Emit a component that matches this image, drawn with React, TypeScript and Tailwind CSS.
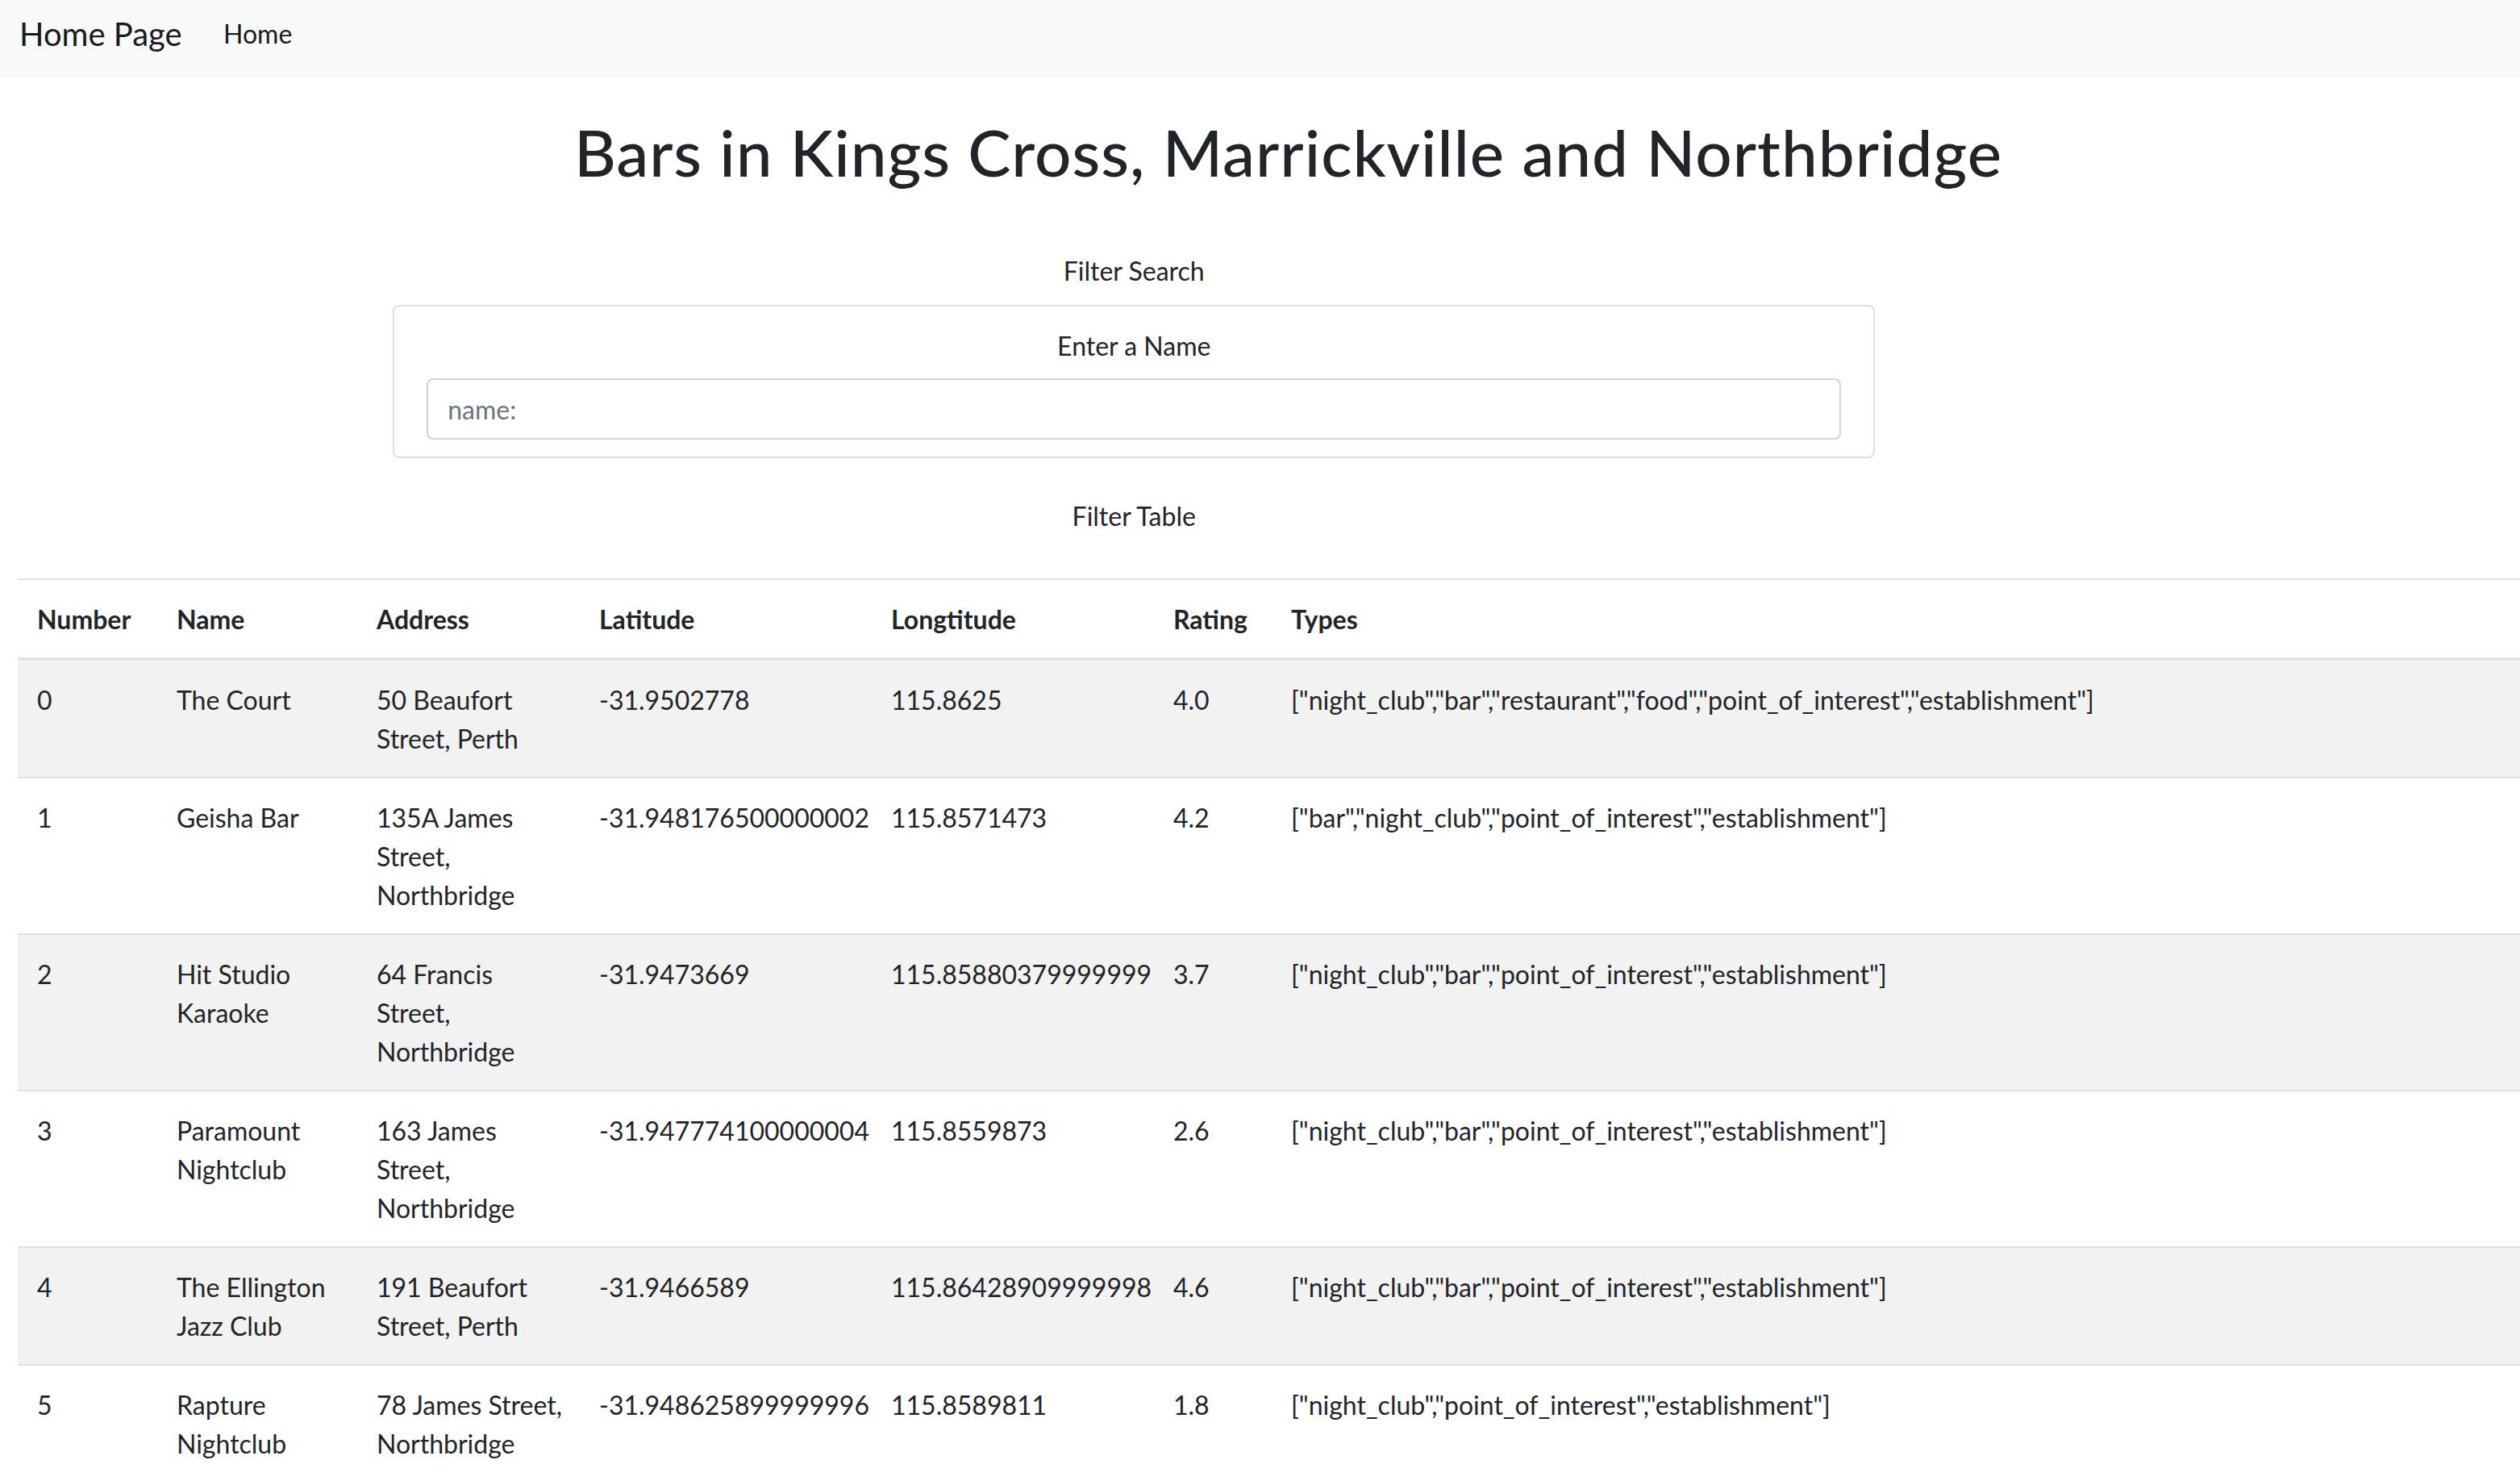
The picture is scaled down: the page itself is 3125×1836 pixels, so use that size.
import React from "react";

type Row = {
  n: string;
  name: string[];
  addr: string[];
  lat: string;
  lng: string;
  rating: string;
  types: string;
};

const T1 = '["night_club","bar","restaurant","food","point_of_interest","establishment"]';
const T2 = '["bar","night_club","point_of_interest","establishment"]';
const T3 = '["night_club","bar","point_of_interest","establishment"]';
const T4 = '["night_club","point_of_interest","establishment"]';

const rows: Row[] = [
  { n: "0", name: ["The Court"], addr: ["50 Beaufort", "Street, Perth"], lat: "-31.9502778", lng: "115.8625", rating: "4.0", types: T1 },
  { n: "1", name: ["Geisha Bar"], addr: ["135A James", "Street,", "Northbridge"], lat: "-31.948176500000002", lng: "115.8571473", rating: "4.2", types: T2 },
  { n: "2", name: ["Hit Studio", "Karaoke"], addr: ["64 Francis", "Street,", "Northbridge"], lat: "-31.9473669", lng: "115.85880379999999", rating: "3.7", types: T3 },
  { n: "3", name: ["Paramount", "Nightclub"], addr: ["163 James", "Street,", "Northbridge"], lat: "-31.947774100000004", lng: "115.8559873", rating: "2.6", types: T3 },
  { n: "4", name: ["The Ellington", "Jazz Club"], addr: ["191 Beaufort", "Street, Perth"], lat: "-31.9466589", lng: "115.86428909999998", rating: "4.6", types: T3 },
  { n: "5", name: ["Rapture", "Nightclub"], addr: ["78 James Street,", "Northbridge"], lat: "-31.948625899999996", lng: "115.8589811", rating: "1.8", types: T4 },
];

const headers = ["Number", "Name", "Address", "Latitude", "Longtitude", "Rating", "Types"];

function Lines({ lines }: { lines: string[] }) {
  return (
    <>
      {lines.map((l, i) => (
        <span key={i} className="block">
          {l}
        </span>
      ))}
    </>
  );
}

const td = "whitespace-nowrap border-t-2 border-[#dee2e6] px-[24px] pt-[25px] pb-[23px] align-top";

export default function App() {
  return (
    <div className="min-h-screen w-full overflow-hidden bg-white font-['Lato','Noto_Sans',sans-serif] text-[#212529]">
      <nav className="flex h-[96px] items-start bg-[#f8f9fa] pl-[24px]">
        <a className="w-[253px] pt-[12px] text-[40px] leading-[60px] text-[#1a1a1a]">Home Page</a>
        <a className="pt-[18px] text-[32px] leading-[48px] text-[#1a1a1a]">Home</a>
      </nav>

      <h1 className="mt-[44px] pl-[70px] text-center text-[80px] font-medium leading-[96px] tracking-[1px]">
        Bars in Kings Cross, Marrickville and Northbridge
      </h1>

      <div className="mt-[76px] w-[90%] text-center text-[32px] leading-[48px]">
        <div>Filter Search</div>
        <div className="mx-auto mt-[18px] w-[1838px] rounded-[8px] border-2 border-[#dfdfdf] px-[40px] pt-[25px] pb-[21px]">
          <div>Enter a Name</div>
          <input
            className="mt-[16px] block h-[76px] w-full rounded-[8px] border-2 border-[#ced4da] bg-white px-[24px] text-left text-[32px] text-[#495057] outline-none placeholder:text-[#6c757d]"
            placeholder="name:"
          />
        </div>
        <div className="mt-[48px]">Filter Table</div>
      </div>

      <div className="mt-[53px] pl-[22px]">
        <table className="w-[3103px] table-fixed border-collapse text-left text-[32px] leading-[48px]">
          <colgroup>
            <col className="w-[173px]" />
            <col className="w-[248px]" />
            <col className="w-[276px]" />
            <col className="w-[362px]" />
            <col className="w-[350px]" />
            <col className="w-[146px]" />
            <col />
          </colgroup>
          <thead>
            <tr>
              {headers.map((h) => (
                <th
                  key={h}
                  className="whitespace-nowrap border-t-2 border-b-4 border-[#dee2e6] px-[24px] pt-[25px] pb-[23px] align-bottom font-bold"
                >
                  {h}
                </th>
              ))}
            </tr>
          </thead>
          <tbody>
            {rows.map((r, i) => (
              <tr key={r.n} className={i % 2 === 0 ? "bg-[#f2f2f2]" : "bg-white"}>
                <td className={td}>{r.n}</td>
                <td className={td}>
                  <Lines lines={r.name} />
                </td>
                <td className={td}>
                  <Lines lines={r.addr} />
                </td>
                <td className={td}>{r.lat}</td>
                <td className={td}>{r.lng}</td>
                <td className={td}>{r.rating}</td>
                <td className={td}>{r.types}</td>
              </tr>
            ))}
          </tbody>
        </table>
      </div>
    </div>
  );
}
